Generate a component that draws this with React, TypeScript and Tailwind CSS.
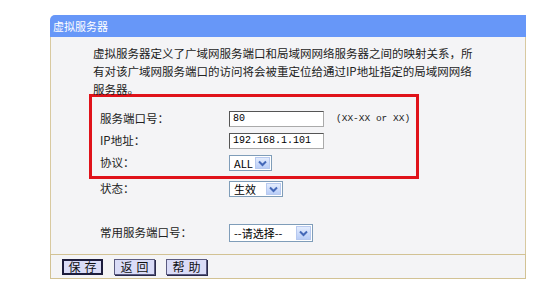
import { ReactNode } from 'react'

const CJK = 'font-["Noto_Sans_CJK_SC",sans-serif]'

function Arrow() {
    return (
        <span className="flex h-full w-[15px] items-center justify-center border border-[#b7c9ef] bg-gradient-to-b from-[#e3ecfd] to-[#b9cdf7]">
            <svg width="9" height="7" viewBox="0 0 9 7">
                <path d="M1 1.5 L4.5 5 L8 1.5" fill="none" stroke="#4468b8" strokeWidth="2" />
            </svg>
        </span>
    )
}

function Select({ value, width, height }: { value: string; width: string; height: string }) {
    return (
        <div className={`flex items-center border border-[#7f9db9] bg-white p-px ${width} ${height}`}>
            <span className="flex-1 pl-[3px] text-[11px] leading-none text-black">{value}</span>
            <Arrow />
        </div>
    )
}

function Input({ value }: { value: string }) {
    return (
        <div className="flex h-[16px] w-[95px] items-center border border-t-[#555] border-l-[#555] border-r-[#aaa] border-b-[#aaa] bg-white pl-[3px] font-['Liberation_Mono',monospace] text-[10px] leading-none text-black">
            {value}
        </div>
    )
}

function Row({ label, children, className = '' }: { label: string; children: ReactNode; className?: string }) {
    return (
        <div className={`flex items-center ${className}`}>
            <span className="w-[129px] text-[11.5px] text-[#222]">{label}</span>
            {children}
        </div>
    )
}

function Btn({ label, primary }: { label: string; primary?: boolean }) {
    return (
        <button
            className={`flex h-[16px] w-[41px] items-center justify-center bg-[#dadcf7] text-[12px] leading-none tracking-[4px] text-[#111] ${
                primary ? 'border-2 border-[#1c1c3c]' : 'border border-[#5a5a80] shadow-[1px_1px_0_#2a2a4a]'
            }`}
        >
            <span className="pl-[4px]">{label}</span>
        </button>
    )
}

export default function App() {
    return (
        <div className={`h-[300px] w-[548px] bg-white pt-[15px] pl-[50px] ${CJK}`}>
            <div className="w-[476px]">
                <div className="flex h-[22px] items-center rounded-tl-[5px] bg-[#6797f8] pl-[3px] text-[11px] text-white">
                    虚拟服务器
                </div>
                <div className="h-[217px] border-x border-[#d8c9a0] bg-[#f4f4f6]">
                    <p className="whitespace-nowrap pt-[7px] pl-[42px] text-[11.5px] leading-[18px] text-[#222]">
                        虚拟服务器定义了广域网服务端口和局域网网络服务器之间的映射关系，所
                        <br />
                        有对该广域网服务端口的访问将会被重定位给通过IP地址指定的局域网网络
                        <br />
                        服务器。
                    </p>
                    <div className="-mt-[4px] ml-[38px] h-[85px] w-[330px] border-[3px] border-[#e0121a] pt-[11px] pl-[8px]">
                        <Row label="服务端口号：" className="h-[22px]">
                            <Input value="80" />
                            <span className="ml-[12px] font-['Liberation_Mono',monospace] text-[9.5px] text-[#222]">
                                (XX-XX or XX)
                            </span>
                        </Row>
                        <Row label="IP地址：" className="h-[22px]">
                            <Input value="192.168.1.101" />
                        </Row>
                        <Row label="协议：" className="h-[22px]">
                            <Select value="ALL" width="w-[43px]" height="h-[16px]" />
                        </Row>
                    </div>
                    <div className="pl-[49px]">
                        <Row label="状态：" className="h-[20px]">
                            <Select value="生效" width="w-[54px]" height="h-[16px]" />
                        </Row>
                        <Row label="常用服务端口号：" className="mt-[23px] h-[22px]">
                            <Select value="--请选择--" width="w-[84px]" height="h-[18px]" />
                        </Row>
                    </div>
                </div>
                <div className="flex h-[25px] items-center gap-[11px] border border-[#d2c294] bg-[#f4f4f6] pl-[11px]">
                    <Btn label="保存" primary />
                    <Btn label="返回" />
                    <Btn label="帮助" />
                </div>
            </div>
        </div>
    )
}
